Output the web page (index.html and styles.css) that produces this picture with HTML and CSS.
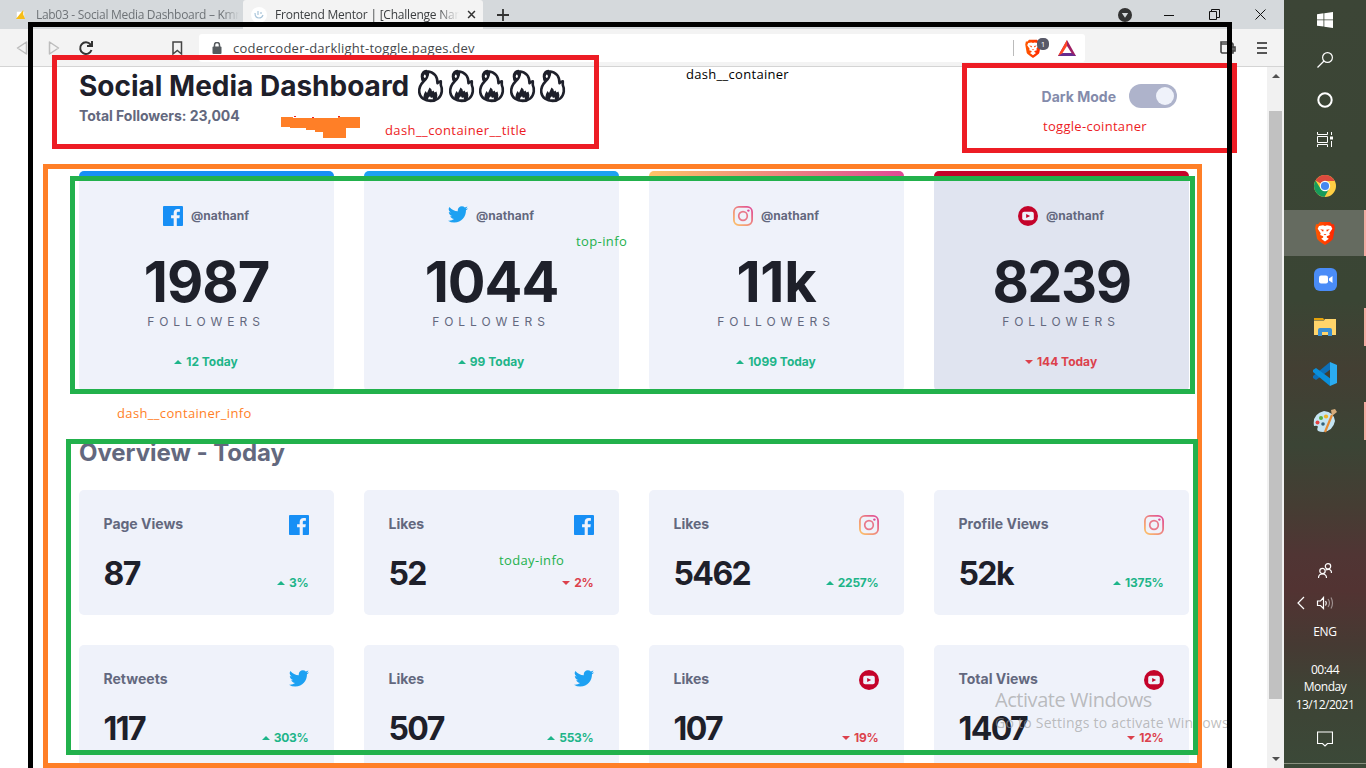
FILE: index.html
```html
<!DOCTYPE html>
<html lang="en">
<head>
<meta charset="utf-8">
<title>Social Media Dashboard</title>
<link rel="stylesheet" href="styles.css">
</head>
<body>
<svg class="defs" width="0" height="0">
  <defs>
    <linearGradient id="ig" x1="0" y1="1" x2="1" y2="0"><stop offset="0" stop-color="#fdc468"/><stop offset="1" stop-color="#df4996"/></linearGradient>
    <linearGradient id="brave" x1="0" y1="0" x2="1" y2="0"><stop offset="0" stop-color="#ff5a00"/><stop offset="1" stop-color="#ff2400"/></linearGradient>
    <symbol id="facebook" viewBox="0 0 20 20"><path fill="#178ff5" d="M18.896 0H1.104C.494 0 0 .494 0 1.104v17.793C0 19.506.494 20 1.104 20h9.58v-7.745H8.076V9.237h2.606V7.01c0-2.583 1.578-3.99 3.883-3.99 1.104 0 2.052.082 2.329.119v2.7h-1.598c-1.254 0-1.496.597-1.496 1.47v1.928h2.989l-.39 3.018h-2.6V20h5.098c.608 0 1.102-.494 1.102-1.104V1.104C20 .494 19.506 0 18.896 0z"/></symbol>
    <symbol id="twitter" viewBox="0 0 20 20"><path fill="#1da1f2" d="M20 2.172a8.192 8.192 0 01-2.357.646 4.11 4.11 0 001.804-2.27 8.22 8.22 0 01-2.605.996A4.096 4.096 0 0013.847.248c-2.65 0-4.596 2.472-3.998 5.037A11.648 11.648 0 011.392.998a4.109 4.109 0 001.27 5.478 4.086 4.086 0 01-1.858-.513c-.045 1.9 1.318 3.679 3.291 4.075a4.113 4.113 0 01-1.853.07 4.106 4.106 0 003.833 2.849A8.25 8.25 0 010 14.658a11.616 11.616 0 006.29 1.843c7.618 0 11.922-6.434 11.662-12.205A8.354 8.354 0 0020 2.172z"/></symbol>
    <symbol id="instagram" viewBox="0 0 20 20"><rect x=".9" y=".9" width="18.2" height="18.2" rx="5" fill="none" stroke="url(#ig)" stroke-width="1.8"/><circle cx="10" cy="10" r="4.3" fill="none" stroke="#e8788a" stroke-width="1.7"/><circle cx="15.4" cy="4.6" r="1.2" fill="#df4996"/></symbol>
    <symbol id="youtube" viewBox="0 0 20 20"><circle cx="10" cy="10" r="10" fill="#c4032a"/><rect x="4.2" y="5.8" width="11.6" height="8.4" rx="2" fill="#eef1fa"/><path fill="#c4032a" d="M8.2 7.9v4.2l4-2.1z"/></symbol>
    <symbol id="flame" viewBox="0 0 27 34"><path fill="none" stroke="#1e202a" stroke-width="2.600" stroke-linejoin="round" d="M6.500 12.500C3 16 1.800 20 2.300 23.500C3.200 29 8 32 13.500 32C19.500 32 24 28.500 24.800 22.500C25.200 19.500 24.500 17.500 23.800 16V12.200Q22 12.500 20.500 14.200C20.500 8 18 3 10 2.200C7 1.800 5 4 5 7.500Q5 10.500 6.500 12.500C9.500 10 11 7 11 3"/><path fill="#1e202a" d="M6 3.500Q8 1.500 12 2.200Q11.500 9 6.300 13.500Q3.500 9 6 3.500Z"/><ellipse cx="7.800" cy="7.200" rx="1" ry="1.700" fill="#fff"/><path fill="#1e202a" d="M6 29.500Q6.500 25 8.500 22L10 24L12.500 18.500Q15 20 15 22.500L16.500 21.500L17.500 23.500L19.500 22.500Q21 26.500 20 29.500L13.500 32Z"/><path fill="#fff" d="M11 30.200Q11 28 13 27.200L14 29L15.500 28.300L16 30.200Z"/></symbol>
    <symbol id="lion" viewBox="0 0 20 24"><path fill="url(#brave)" d="M5 1h10l2 2.200h2L19.800 7 18 17.500Q17.300 19.500 10 24Q2.700 19.500 2 17.500L.2 7 1 3.200h2z"/><path fill="#fff" d="M4 5l4-.7 2 .7 2-.7 4 .7 1.300 2.800-3 4.500.5 1.800-3 1.200v1.200l2 1.300-3.800 2.800L6.200 17.800l2-1.300v-1.200l-3-1.200.5-1.800-3-4.500z"/><path fill="#ff3d00" d="M5.200 8.200l3.500.6-.6 2zM14.800 8.200l-3.500.6.6 2zM8.500 13h3l-1.500 1.200z"/></symbol>
  </defs>
</svg>
<div class="desktop">
  <main class="browser">
    <div class="tabs">
      <div class="tab"><svg class="fav" viewBox="0 0 12 12"><path fill="#fff" d="M2 3h8v8H2z"/><path fill="#f6bd18" d="M1 11l8-10v5l2 5z"/></svg><span class="tab-text first-tab-text">Lab03 - Social Media Dashboard – Kmn</span></div>
      <div class="tab active"><svg class="fav big" viewBox="0 0 16 16"><circle cx="8" cy="8" r="8" fill="#fff"/><path d="M4 6q0 5 4 5 3 0 4-3M7 4v4M10 5v2" fill="none" stroke="#a9c5da" stroke-width="1.200"/></svg><span class="tab-text">Frontend Mentor | [Challenge Name</span><svg class="tab-x" viewBox="0 0 10 10"><path d="M1.200 1.200l7.600 7.600M8.800 1.200L1.200 8.800" stroke="#333" stroke-width="1.700"/></svg></div>
      <svg class="plus" viewBox="0 0 12 12"><path d="M6 0v12M0 6h12" stroke="#333" stroke-width="1.800"/></svg>
      <div class="window-buttons">
        <svg class="profile" width="14" height="14" viewBox="0 0 14 14"><circle cx="7" cy="7" r="7" fill="#333"/><path d="M3.800 5h6.400L7 9.800z" fill="#d5d8da"/></svg>
        <svg width="10" height="10" viewBox="0 0 10 10"><path d="M0 5.500h10" stroke="#111"/></svg>
        <svg width="11" height="11" viewBox="0 0 11 11"><path d="M.5 2.500h7v8h-7zM2.500 2.500v-2h8v8h-3" fill="none" stroke="#111"/></svg>
        <svg width="11" height="11" viewBox="0 0 11 11"><path d="M.5.500l10 10M10.500.500l-10 10" stroke="#111"/></svg>
      </div>
    </div>
    <div class="toolbar">
      <svg class="nav-icons" viewBox="0 0 184 37"><path d="M26.500 13v12L17.500 19zM49.500 13v12L58.500 19z" fill="none" stroke="#bdbdbd" stroke-width="1.500" stroke-linejoin="round"/><path d="M90.500 15.500A5.800 5.800 0 1 0 91.500 21M92 12v5h-5" fill="none" stroke="#333" stroke-width="2"/><path d="M173 13h8.500v12l-4.200-3.500L173 25z" fill="none" stroke="#444" stroke-width="1.500"/></svg>
      <div class="address">
        <svg width="10" height="12" viewBox="0 0 10 12"><rect x=".5" y="4.500" width="9" height="7.500" rx="1" fill="#555a5e"/><path d="M2.500 5V3a2.500 2.500 0 0 1 5 0v2" fill="none" stroke="#555a5e" stroke-width="1.500"/></svg>
        <span class="url">codercoder-darklight-toggle.pages.dev</span>
        <svg class="shields" width="64" height="24" viewBox="0 0 64 24"><path d="M.5 4v16" stroke="#bbb"/><use href="#lion" x="12" y="3" width="16" height="19"/><rect x="24" y="2" width="12" height="12" rx="5" fill="#585968"/><text x="27.800" y="11" class="badge-text">1</text><path d="M54 4l9 16H45z" fill="#9e1f63"/><path d="M54 4v7l-5 8-4 1z" fill="#ff4724"/><path d="M45 20l5-3h8l5 3z" fill="#662d91"/><path d="M54 10l4.500 7h-9z" fill="#fff"/></svg>
      </div>
      <svg class="wallet" width="16" height="14" viewBox="0 0 16 14"><path d="M1 1h10l2 2v9H2L1 11zM1 3h12M9 6h6v4H9z" fill="none" stroke="#444" stroke-width="1.600"/></svg>
      <svg class="menu" width="10" height="12" viewBox="0 0 10 12"><path d="M0 1h10M0 6h10M0 11h10" stroke="#555" stroke-width="1.800"/></svg>
    </div>
    <div class="viewport">
      <div class="page">
        <header class="header">
          <div>
            <h1 class="title">Social Media Dashboard <span class="flames"><svg><use href="#flame"/></svg><svg><use href="#flame"/></svg><svg><use href="#flame"/></svg><svg><use href="#flame"/></svg><svg><use href="#flame"/></svg></span></h1>
            <p class="total">Total Followers: 23,004</p>
          </div>
          <div class="toggle-row"><span>Dark Mode</span><span class="toggle"><span class="knob"></span></span></div>
        </header>
        <section class="grid">
          <article class="card fb"><div class="handle"><svg><use href="#facebook"/></svg><span>@nathanf</span></div><div class="count">1987</div><div class="followers">FOLLOWERS</div><div class="change up">12 Today</div></article>
          <article class="card tw"><div class="handle"><svg><use href="#twitter"/></svg><span>@nathanf</span></div><div class="count">1044</div><div class="followers">FOLLOWERS</div><div class="change up">99 Today</div></article>
          <article class="card insta"><div class="handle"><svg><use href="#instagram"/></svg><span>@nathanf</span></div><div class="count">11k</div><div class="followers">FOLLOWERS</div><div class="change up">1099 Today</div></article>
          <article class="card yt"><div class="handle"><svg><use href="#youtube"/></svg><span>@nathanf</span></div><div class="count">8239</div><div class="followers">FOLLOWERS</div><div class="change down">144 Today</div></article>
        </section>
        <h2 class="overview">Overview - Today</h2>
        <section class="grid">
          <article class="stat"><span>Page Views</span><svg><use href="#facebook"/></svg><b>87</b><div class="change up">3%</div></article>
          <article class="stat"><span>Likes</span><svg><use href="#facebook"/></svg><b>52</b><div class="change down">2%</div></article>
          <article class="stat"><span>Likes</span><svg><use href="#instagram"/></svg><b>5462</b><div class="change up">2257%</div></article>
          <article class="stat"><span>Profile Views</span><svg><use href="#instagram"/></svg><b>52k</b><div class="change up">1375%</div></article>
          <article class="stat"><span>Retweets</span><svg><use href="#twitter"/></svg><b>117</b><div class="change up">303%</div></article>
          <article class="stat"><span>Likes</span><svg><use href="#twitter"/></svg><b>507</b><div class="change up">553%</div></article>
          <article class="stat"><span>Likes</span><svg><use href="#youtube"/></svg><b>107</b><div class="change down">19%</div></article>
          <article class="stat"><span>Total Views</span><svg><use href="#youtube"/></svg><b>1407</b><div class="change down">12%</div></article>
        </section>
      </div>
      <div class="scrollbar"><i class="arrow-up"></i><i class="thumb"></i><i class="arrow-down"></i></div>
    </div>
  </main>
  <aside class="taskbar">
    <div class="slot"><svg width="16" height="16" viewBox="0 0 16 16"><path fill="#fff" d="M0 2.200l6.500-.9v6.200H0zM7.300 1.200L16 0v7.500H7.300zM0 8.300h6.500v6.300L0 13.700zM7.300 8.300H16V16l-8.700-1.200z"/></svg></div>
    <div class="slot"><svg width="16" height="16" viewBox="0 0 16 16"><circle cx="10.500" cy="5.500" r="4.900" class="line"/><path d="M7 9L.5 15.500" class="line"/></svg></div>
    <div class="slot"><svg width="16" height="16" viewBox="0 0 16 16"><circle cx="8" cy="8" r="6.700" fill="none" stroke="#fff" stroke-width="2"/></svg></div>
    <div class="slot"><svg width="16" height="16" viewBox="0 0 16 16"><path d="M.5 0v2.500h10V0M.5 15v-2.500h10V15M.5 4.500h10v6H.5zM14.500 0v3M14.500 9v6" class="line thin"/><path d="M13 4.500h3v3h-3z" fill="#fff"/></svg></div>
    <div class="slot app first-app"><svg width="22" height="22" viewBox="0 0 22 22"><circle cx="11" cy="11" r="11" fill="#ffcf44"/><path fill="#db4a3e" d="M11 11L1.500 5.500A11 11 0 0 1 20.500 5.500L20.600 6H11z"/><path fill="#179b5b" d="M1.500 5.500A11 11 0 0 0 10.500 22L15.300 13.500 6.500 13.500z"/><circle cx="11" cy="11" r="5.200" fill="#fff"/><circle cx="11" cy="11" r="4.100" fill="#4688f1"/></svg></div>
    <div class="slot app current open"><svg width="20" height="24"><use href="#lion"/></svg></div>
    <div class="slot app"><svg width="23" height="23" viewBox="0 0 23 23"><rect width="23" height="23" rx="6" fill="#4a8cf7"/><rect x="5" y="7.500" width="9" height="8" rx="2" fill="#fff"/><path fill="#fff" d="M15 10.500l3.500-2.500v7L15 12.500z"/></svg></div>
    <div class="slot app open"><svg width="22" height="18" viewBox="0 0 22 18"><path fill="#e2a10c" d="M0 0h9l1.500 2H0z"/><path fill="#ffd56b" d="M0 2.500h10L11 1h11v16H0z"/><path fill="#3a8fd3" d="M4 18v-6q0-2 2-2h10q2 0 2 2v6h-4v-4H8v4z"/></svg></div>
    <div class="slot app"><svg width="24" height="24" viewBox="0 0 24 24"><path fill="#0d6fb8" d="M17 0l1 7L3 18 0 16v-2z"/><path fill="#0a8fdc" d="M17 24l1-7L3 6 0 8v2z"/><path fill="#2bacf2" d="M17 0l7 3v18l-7 3z"/></svg></div>
    <div class="slot app open"><svg width="24" height="24" viewBox="0 0 24 24"><path fill="#c5e4f3" d="M11 2Q21 3 22 12 20 22 10 23 3 23 4.500 19 6 16 1 17-1 5 11 2Z"/><circle cx="4.500" cy="13.500" r="2" fill="#e24343"/><circle cx="8" cy="9" r="2" fill="#58ae42"/><circle cx="13" cy="7.500" r="2.100" fill="#efb425"/><circle cx="10" cy="15" r="1.800" fill="#356179"/><path d="M19 6l-7 17" stroke="#e68a34" stroke-width="2.200"/><path fill="#d6ab7b" d="M18 1l4-1 2 3-5 4z"/></svg></div>
    <div class="tray">
      <svg width="14" height="16" viewBox="0 0 14 16"><circle cx="4.500" cy="8" r="2.700" class="line"/><path d="M.5 15q0-4 4-4t4 4" class="line"/><circle cx="10" cy="3.300" r="2.700" class="line"/><path d="M7.500 7q6-2 6 3" class="line"/></svg>
      <svg class="volume" width="38" height="14" viewBox="0 0 38 14"><path d="M8 1L2 7l6 6" class="line"/><path d="M21.500 5h3l3-3.500v11L24.500 9.500h-3zM29.500 5q1.500 2 0 4.500" class="line"/><path d="M32 3q3 4 0 8M35 1.500q3 5.500 0 11" class="line dim"/></svg>
      <span class="lang">ENG</span>
      <span class="clock">00:44<br>Monday<br>13/12/2021</span>
      <svg class="notice" width="16" height="16" viewBox="0 0 16 16"><path d="M.5 1h15v11.500h-5L8 15l-2.500-2.500h-5z" class="line"/></svg>
    </div>
  </aside>
  <div class="watermark"><div class="wm-title">Activate Windows</div><div class="wm-sub">Go to Settings to activate Windows.</div></div>
  <div class="frame red title-frame"></div>
  <div class="frame red toggle-frame"></div>
  <div class="frame orange info-frame"></div>
  <div class="frame green top-frame"></div>
  <div class="frame green today-frame"></div>
  <div class="frame black root-frame"></div>
  <svg class="scribble" viewBox="0 0 80 24"><path fill="#ff7f27" d="M0 2h12v1h45V2h22v11h-14v10H42v-6H34v-2H25v-2H9v-1H0z"/><path d="M13 1.500h2M31 2.500h2M57 1.500h2" stroke="#ed1c24"/></svg>
  <span class="note n-root">dash__container</span>
  <span class="note n-title">dash__container__title</span>
  <span class="note n-toggle">toggle-cointaner</span>
  <span class="note n-top">top-info</span>
  <span class="note n-info">dash__container_info</span>
  <span class="note n-today">today-info</span>
</div>
</body>
</html>
```
FILE: styles.css
```css
* { box-sizing: border-box; }
body { margin: 0; font-family: Inter, sans-serif; background: #fff; }
.defs { position: absolute; }
.desktop { position: relative; display: flex; width: 1366px; height: 768px; overflow: hidden; }
.browser { width: 1284px; display: flex; flex-direction: column; }
.tabs { height: 29px; background: #d5d9dc; display: flex; align-items: center; font: 12px "Open Sans", sans-serif; color: #6e7377; }
.tab { width: 243px; height: 29px; padding-left: 15px; display: flex; align-items: center; }
.tab.active { width: 240px; padding-left: 8px; background: #f3f3f3; color: #3b3e40; border-radius: 3px 3px 0 0; }
.fav { width: 11px; height: 11px; flex: none; }
.fav.big { width: 16px; height: 16px; }
.tab-text { width: 184px; margin-left: 8px; overflow: hidden; white-space: nowrap; letter-spacing: -.22px; mask-image: linear-gradient(90deg, #000 88%, transparent); }
.first-tab-text { width: 203px; margin-left: 10px; letter-spacing: -.3px; mask-image: linear-gradient(90deg, #000 92%, transparent); }
.tab-x { width: 9px; height: 9px; margin-left: 8px; }
.plus { width: 12px; height: 12px; margin-left: 14px; }
.window-buttons { margin-left: auto; padding-right: 18px; display: flex; align-items: center; gap: 35px; }
.profile { margin-right: -3px; }
.toolbar { height: 38px; background: #f3f3f3; border-bottom: 1px solid #d4d4d4; display: flex; align-items: center; }
.nav-icons { width: 184px; height: 37px; }
.address { width: 886px; height: 28px; margin-left: 15px; padding: 0 8px 0 13px; display: flex; align-items: center; background: #fff; border-radius: 3px; }
.url { margin-left: 11px; font: 13px "Open Sans", sans-serif; color: #44484c; letter-spacing: .25px; }
.shields { margin-left: auto; }
.badge-text { font: 8px "Open Sans", sans-serif; fill: #fff; }
.wallet { margin-left: 135px; }
.menu { margin-left: 21px; }
.viewport { flex: 1; min-height: 0; display: flex; overflow: hidden; }
.page { flex: 1; padding: 2px 78px 0 79px; overflow: hidden; color: #63687e; }
.header { height: 102px; display: flex; justify-content: space-between; }
.title { margin: 0; height: 34px; font-size: 28px; line-height: 34px; color: #1e202a; display: flex; gap: 8px; white-space: nowrap; }
.flames { display: flex; gap: 3.500px; }
.flames svg { width: 27px; height: 34px; }
.total { margin: 3px 0 0; font-size: 14px; line-height: 20px; font-weight: 700; letter-spacing: -.03px; }
.toggle-row { height: 24px; margin: 15px 12px 0 0; display: flex; align-items: center; gap: 13px; font-size: 14px; font-weight: 700; color: #848bab; }
.toggle { width: 48px; height: 24px; padding: 3px; border-radius: 12px; background: #aeb3cb; display: flex; justify-content: flex-end; }
.knob { width: 18px; height: 18px; border-radius: 50%; background: #eff2fa; }
.grid { display: grid; grid-template-columns: repeat(4, 255px); gap: 30px; }
.card { height: 220px; padding-top: 35px; border-radius: 5px; display: flex; flex-direction: column; align-items: center; background: linear-gradient(#178ff5 0 5px, #eff2fa 5px); }
.tw { background: linear-gradient(#1da1f2 0 5px, #eff2fa 5px); }
.insta { background: linear-gradient(90deg, #fdc468, #df4996) top / 100% 5px no-repeat, #eff2fa; }
.yt { background: linear-gradient(#c4032a 0 5px, #e0e4f0 5px); }
.handle { height: 20px; padding-right: 1px; display: flex; align-items: center; gap: 8px; font-size: 12px; font-weight: 700; }
.handle svg { width: 20px; height: 20px; }
.handle span { line-height: 16px; letter-spacing: .05px; }
.count { margin-top: 28px; font-size: 56px; line-height: 56px; font-weight: 700; letter-spacing: -1px; font-kerning: none; color: #1e202a; }
.insta .count { letter-spacing: -.2px; }
.yt .count { letter-spacing: -1.500px; }
.followers { margin-top: 5px; font-size: 12px; line-height: 14px; letter-spacing: 4.950px; padding-right: 1px; }
.card .change { margin-top: 25px; padding-right: 1px; }
.change { display: flex; align-items: center; gap: 4px; font-size: 12px; line-height: 16px; font-weight: 700; }
.change::before { content: ""; border: 4px solid transparent; }
.up { color: #1eb589; }
.up::before { border-top: 0; border-bottom-color: #1eb589; }
.down { color: #dc414c; }
.down::before { border-bottom: 0; border-top-color: #dc414c; }
.overview { margin: 47px 0 22px; font-size: 24px; line-height: 30px; letter-spacing: -.05px; }
.stat { height: 125px; padding: 25px 25px 25px 24.500px; border-radius: 5px; background: #eff2fa; display: grid; grid-template-columns: 1fr auto; grid-template-rows: 20px 40px; row-gap: 19px; font-size: 14px; line-height: 18px; font-weight: 700; }
.stat svg { width: 20px; height: 20px; justify-self: end; }
.stat b { font-size: 32px; line-height: 40px; font-weight: 700; letter-spacing: -1.600px; color: #1e202a; }
.stat .change { align-self: end; justify-self: end; margin-bottom: 3px; padding-right: .5px; letter-spacing: -.25px; }
.scrollbar { width: 17px; background: #f1f1f1; display: flex; flex-direction: column; align-items: center; }
.arrow-up { margin-top: 7px; border: 4px solid transparent; border-top: 0; border-bottom-color: #505050; }
.thumb { width: 13px; height: 588px; margin-top: 33px; background: #c1c1c1; }
.arrow-down { margin-top: 58px; border: 4px solid transparent; border-bottom: 0; border-top-color: #505050; }
.taskbar { width: 82px; display: flex; flex-direction: column; color: #fff; background: linear-gradient(#3c4536 0, #3a4534 300px, #433f33 370px, #3b4435 445px, #453d33 505px, #503534 555px, #523332 590px, #463a33 645px, #3e4335 690px, #3b4938 768px); }
.slot { flex: none; height: 40px; display: flex; align-items: center; justify-content: center; border-right: 2px solid transparent; border-left: 2px solid transparent; }
.app { height: 47px; }
.first-app { margin-top: 3px; padding-bottom: 1px; }
.current { height: 46px; background: #656b60; }
.open { border-right-color: #f4a9a0; }
.open:not(.current) { height: 38px; margin: 5px 0 4px; }
.line { fill: none; stroke: #fff; stroke-width: 1.200; }
.thin { stroke-width: 1; }
.dim { opacity: .45; }
.tray { margin-top: 119px; height: 201px; display: flex; flex-direction: column; align-items: center; border-bottom: 1px solid #89907f; font: 12px/17.500px "Open Sans", sans-serif; }
.volume { margin: 17px 20px 0 0; }
.lang { margin-top: 13px; letter-spacing: -.3px; }
.clock { margin-top: 20px; text-align: center; letter-spacing: -.5px; }
.notice { margin-top: 18px; }
.frame { position: absolute; border: 5px solid; }
.red { border-color: #ed1c24; }
.orange { border-color: #ff7f27; }
.green { border-color: #22b14c; }
.black { border-color: #000; }
.title-frame { left: 52px; top: 55px; width: 547px; height: 94px; }
.toggle-frame { left: 962px; top: 63px; width: 275px; height: 90px; }
.info-frame { left: 43px; top: 164px; width: 1159px; height: 604px; }
.top-frame { left: 70px; top: 176px; width: 1125px; height: 218px; }
.today-frame { left: 66px; top: 439px; width: 1132px; height: 316px; }
.root-frame { left: 28px; top: 22px; width: 1204px; height: 760px; }
.scribble { position: absolute; left: 281px; top: 115px; width: 80px; height: 24px; }
.note { position: absolute; font: 13px/18px "Open Sans", sans-serif; letter-spacing: .3px; white-space: nowrap; }
.n-root { left: 686px; top: 65px; color: #000; }
.n-title { left: 385px; top: 121px; letter-spacing: .4px; color: #ed1c24; }
.n-toggle { left: 1043px; top: 117px; color: #ed1c24; }
.n-top { left: 576px; top: 232px; letter-spacing: .4px; color: #22b14c; }
.n-info { left: 117px; top: 404px; letter-spacing: .35px; color: #ff7f27; }
.n-today { left: 499px; top: 551px; letter-spacing: .35px; color: #22b14c; }
.watermark { position: absolute; left: 995px; top: 687px; font-family: "Open Sans", sans-serif; color: rgba(155, 155, 155, .65); white-space: nowrap; }
.wm-title { font-size: 20px; line-height: 26px; letter-spacing: -.45px; }
.wm-sub { font-size: 14px; line-height: 20px; letter-spacing: .24px; }
```
